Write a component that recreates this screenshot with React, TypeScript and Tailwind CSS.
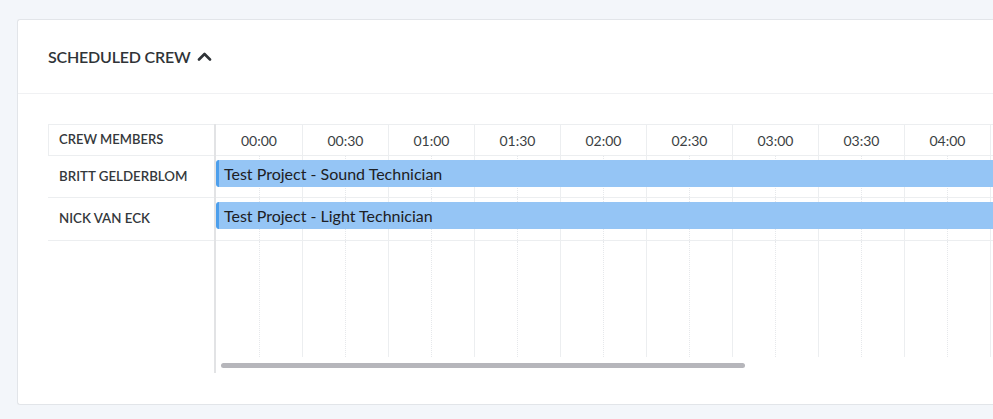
import React from "react";

const times = ["00:00", "00:30", "01:00", "01:30", "02:00", "02:30", "03:00", "03:30", "04:00"];
const cols = [0, 1, 2, 3, 4, 5, 6, 7, 8, 9, 10];
const crew = [
  { name: "BRITT GELDERBLOM", job: "Test Project - Sound Technician", h: "h-[42px]" },
  { name: "NICK VAN ECK", job: "Test Project - Light Technician", h: "h-[43px]" },
];

function HalfCells({ h }: { h: string }) {
  return (
    <div className={`flex ${h}`}>
      {cols.map((c) => (
        <div key={c} className="flex shrink-0">
          <div className={`${c === 0 ? "w-[44px]" : "w-[43px]"} shrink-0 border-r border-dotted border-[#e6e8eb]`} />
          <div className="w-[43px] shrink-0 border-r border-[#eceef0]" />
        </div>
      ))}
    </div>
  );
}

export default function App() {
  return (
    <div className="min-h-screen bg-[#f3f6fa] pt-[19px] pl-[17px] pb-[14px] overflow-hidden" style={{ fontFamily: "Lato, 'Liberation Sans', sans-serif" }}>
      <div className="bg-white border border-r-0 border-[#e2e5e9] rounded-l-[3px] h-[386px] overflow-hidden">
        <div className="h-[74px] flex items-center pl-[30px] border-b border-[#f0f1f3]">
          <span className="text-[16px] font-semibold text-[#2f3337] tracking-[-0.2px]">SCHEDULED CREW</span>
          <svg className="ml-[7px] mt-[-1px]" width="15" height="10" viewBox="0 0 15 10" fill="none">
            <path d="M2 8.5 L7.5 3 L13 8.5" stroke="#2f3337" strokeWidth="2.6" strokeLinecap="round" strokeLinejoin="round" />
          </svg>
        </div>
        <div className="pt-[30px] pl-[30px] flex">
          <div className="w-[166px] shrink-0">
            <div className="h-[32px] border border-r-0 border-[#eceef0] flex items-center pl-[10px] text-[13px] font-semibold text-[#34383c]">
              CREW MEMBERS
            </div>
            {crew.map((c) => (
              <div key={c.name} className={`${c.h} border-b border-[#eceef0] flex items-center pl-[11px] text-[13.3px] font-semibold text-[#34383c]`}>
                {c.name}
              </div>
            ))}
          </div>
          <div className="flex-1 min-w-0 overflow-hidden">
            <div className="border-l-2 border-[#e2e3e5] h-[249px]">
              <div className="flex h-[32px] border-y border-[#eceef0]">
                {cols.map((c) => (
                  <div key={c} className={`${c === 0 ? "w-[87px]" : "w-[86px]"} shrink-0 border-r border-[#eceef0] flex items-center justify-center text-[14px] text-[#3b3f44]`}>
                    {times[c] ?? ""}
                  </div>
                ))}
              </div>
              {crew.map((c) => (
                <div key={c.name} className={`relative border-b border-[#eceef0] ${c.h}`}>
                  <HalfCells h="h-full" />
                  <div className="absolute left-0 right-0 top-[4px] h-[27px] bg-[#95c5f5] border-l-[3px] border-[#4d9fec] rounded-l-[3px] flex items-center pl-[5px] text-[16px] text-[#1d2024] whitespace-nowrap">
                    {c.job}
                  </div>
                </div>
              ))}
              <HalfCells h="h-[116px]" />
              <div className="pt-[6px] pl-[5px]">
                <div className="w-[524px] h-[5px] rounded-[3px] bg-[#b6b6bb]" />
              </div>
            </div>
          </div>
        </div>
      </div>
    </div>
  );
}
